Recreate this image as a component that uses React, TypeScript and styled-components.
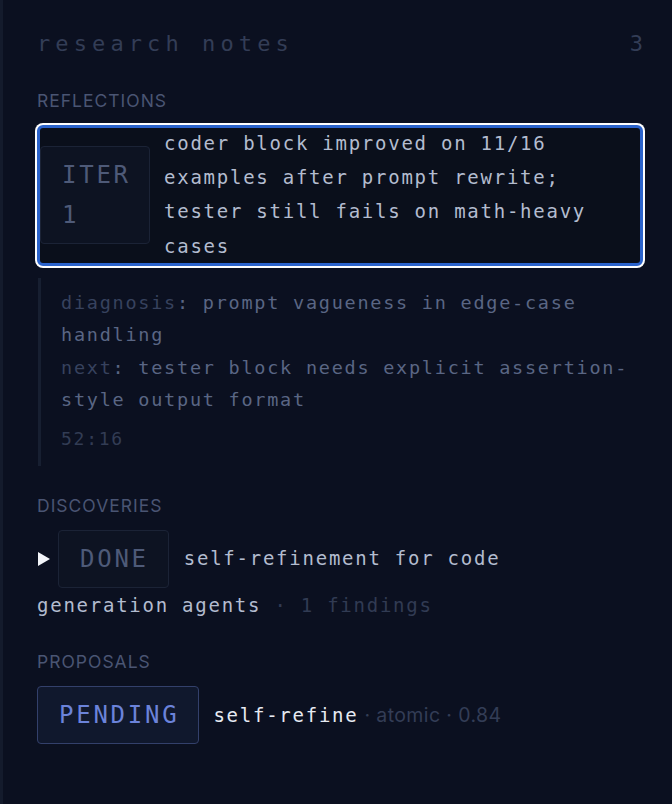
import React from "react";
import styled, { createGlobalStyle, css } from "styled-components";

const mono = `"DejaVu Sans Mono", "Liberation Mono", monospace`;
const sans = `Inter, "Noto Sans", "Liberation Sans", sans-serif`;

const GlobalStyle = createGlobalStyle`
  html, body {
    margin: 0;
    padding: 0;
    background: #0b1020;
  }
  body {
    font-family: ${mono};
    -webkit-font-smoothing: antialiased;
  }
  * { box-sizing: border-box; }
`;

const Panel = styled.aside`
  min-height: 100vh;
  border-left: 3px solid #141b2c;
  padding: 27px 29px 40px 34px;
  display: flex;
  flex-direction: column;
  gap: 28px;
  background: #0b1020;
`;

const Header = styled.header`
  display: flex;
  align-items: center;
  justify-content: space-between;
  font-family: ${mono};
  font-size: 22px;
  line-height: 34px;
  color: #333d56;
`;

const Title = styled.h2`
  margin: 0;
  font: inherit;
  letter-spacing: 5.1px;
`;

const Count = styled.span`
  letter-spacing: 0;
`;

const Section = styled.section`
  display: flex;
  flex-direction: column;
`;

const SectionLabel = styled.h3`
  margin: 0 0 12px;
  font-family: ${sans};
  font-weight: 400;
  font-size: 17.5px;
  line-height: 24px;
  letter-spacing: 1px;
  color: #4a5573;
`;

type Tone = "muted" | "accent";

const Badge = styled.span<{ $tone: Tone; $width?: number }>`
  display: inline-block;
  vertical-align: middle;
  font-family: ${mono};
  font-size: 24px;
  line-height: 40px;
  letter-spacing: 2.75px;
  padding: 8px 19px 8px 21px;
  border-radius: 4px;
  border: 1px solid;
  flex-shrink: 0;
  ${({ $width }) =>
    $width &&
    css`
      width: ${$width}px;
    `}
  ${({ $tone }) =>
    $tone === "accent"
      ? css`
          color: #6b83da;
          border-color: #33406b;
          background: #10182d;
        `
      : css`
          color: #4e5a78;
          border-color: #1b2336;
          background: #0d1322;
        `}
`;

const ReflectionCard = styled.div<{ $selected?: boolean }>`
  display: flex;
  align-items: center;
  gap: 14px;
  border-radius: 6px;
  background: #0a0f1b;
  border: 3px solid transparent;
  ${({ $selected }) =>
    $selected &&
    css`
      border-color: #2b63cc;
      box-shadow: 0 0 0 2px #ffffff;
    `}
`;

const CardText = styled.p`
  margin: -2px 0 0;
  font-family: ${mono};
  font-size: 19px;
  line-height: 34.2px;
  letter-spacing: 1.75px;
  color: #b3bccf;
`;

const Detail = styled.div`
  margin: 12px 0 0 1px;
  border-left: 3px solid #171f31;
  padding: 9px 0 11px 20px;
  font-family: ${mono};
  font-size: 18.5px;
  letter-spacing: 1.75px;
  color: #5a6684;
`;

const DetailLine = styled.p`
  margin: 0;
  line-height: 32.4px;
`;

const Key = styled.span`
  color: #37425e;
`;

const Time = styled.div`
  margin-top: 7px;
  line-height: 32px;
  font-size: 18px;
  color: #323c54;
`;

const FlowRow = styled.div`
  padding-right: 12px;
  font-family: ${mono};
  font-size: 19px;
  line-height: 34px;
  letter-spacing: 1.75px;
  color: #b3bccf;

  ${Badge} {
    margin-right: 15px;
  }
`;

const Caret = styled.span`
  display: inline-block;
  vertical-align: middle;
  width: 0;
  height: 0;
  margin: 0 8px 0 1px;
  border-left: 12px solid #f3f5f9;
  border-top: 7.5px solid transparent;
  border-bottom: 7.5px solid transparent;
`;

const Dim = styled.span`
  color: #313b53;
`;

const ProposalRow = styled.div`
  display: flex;
  align-items: center;
  gap: 14px;
`;

const Name = styled.span`
  font-family: ${mono};
  font-size: 19px;
  letter-spacing: 1.75px;
  color: #e6eaf2;
`;

const Meta = styled.span`
  font-family: ${sans};
  font-size: 19.5px;
  letter-spacing: 0.4px;
  color: #333d56;
`;

export default function App() {
  return (
    <>
      <GlobalStyle />
      <Panel>
        <Header>
          <Title>research notes</Title>
          <Count>3</Count>
        </Header>

        <Section>
          <SectionLabel>REFLECTIONS</SectionLabel>
          <ReflectionCard $selected>
            <Badge $tone="muted" $width={110}>
              ITER 1
            </Badge>
            <CardText>
              coder block improved on 11/16 examples after prompt rewrite;
              tester still fails on math-heavy cases
            </CardText>
          </ReflectionCard>
          <Detail>
            <DetailLine>
              <Key>diagnosis</Key>: prompt vagueness in edge-case handling
            </DetailLine>
            <DetailLine>
              <Key>next</Key>: tester block needs explicit assertion-style
              output format
            </DetailLine>
            <Time>52:16</Time>
          </Detail>
        </Section>

        <Section>
          <SectionLabel>DISCOVERIES</SectionLabel>
          <FlowRow>
            <Caret />
            <Badge $tone="muted">DONE</Badge>self-refinement for code generation agents <Dim>· 1 findings</Dim>
          </FlowRow>
        </Section>

        <Section>
          <SectionLabel>PROPOSALS</SectionLabel>
          <ProposalRow>
            <Badge $tone="accent">PENDING</Badge>
            <span>
              <Name>self-refine</Name>
              <Meta> · atomic · 0.84</Meta>
            </span>
          </ProposalRow>
        </Section>
      </Panel>
    </>
  );
}
